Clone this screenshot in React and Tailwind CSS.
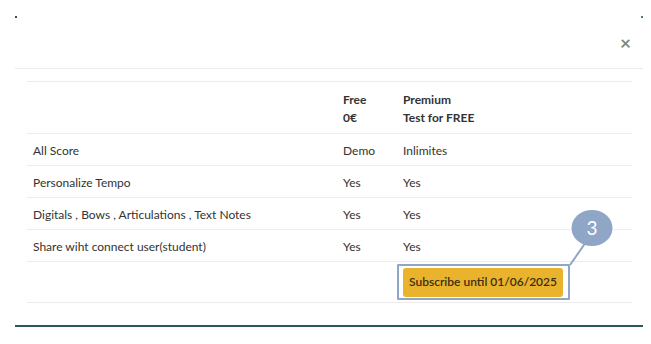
import React from "react";

const rows = [
  { label: "All Score", free: "Demo", premium: "Inlimites" },
  { label: "Personalize Tempo", free: "Yes", premium: "Yes" },
  { label: "Digitals , Bows , Articulations , Text Notes", free: "Yes", premium: "Yes" },
  { label: "Share wiht connect user(student)", free: "Yes", premium: "Yes" },
];

const App = () => {
  return (
    <div
      className="w-[651px] h-[344px] bg-white pt-[16px] pl-[15px] text-[#333] text-[12px]"
      style={{ fontFamily: "Lato, 'Noto Sans', sans-serif" }}
    >
      <div className="relative w-[628px] h-[311px] border-b-2 border-[#2f5660]">
        <span className="absolute left-0 top-0 w-[2px] h-[2px] bg-[#2f5660]" />
        <span className="absolute right-0 top-0 w-[2px] h-[2px] bg-[#4a7a86]" />

        <div className="h-[53px] border-b border-[#ececec] flex items-center justify-end pr-[12px]">
          <span className="text-[#858585] text-[19px] font-bold leading-none">×</span>
        </div>

        <div className="px-[12px] pt-[12px]">
          <table className="w-[605px] border-collapse">
            <thead>
              <tr className="border-t border-b border-[#ececec] h-[52px]">
                <th className="w-[310px]" />
                <th className="w-[60px] text-left font-bold pl-[6px] leading-[18px] align-middle pt-[2px]">
                  <div>Free</div>
                  <div>0€</div>
                </th>
                <th className="text-left font-bold pl-[6px] leading-[18px] align-middle pt-[2px]">
                  <div>Premium</div>
                  <div>Test for FREE</div>
                </th>
              </tr>
            </thead>
            <tbody>
              {rows.map((r) => (
                <tr key={r.label} className="h-[32px] border-b border-[#ececec]">
                  <td className="pl-[6px] pt-[2px]">{r.label}</td>
                  <td className="pl-[6px] pt-[2px]">{r.free}</td>
                  <td className="pl-[6px] pt-[2px]">{r.premium}</td>
                </tr>
              ))}
              <tr className="h-[41px] border-b border-[#ececec]">
                <td />
                <td />
                <td className="pl-[6px]">
                  <div className="relative w-[160px] h-[29px]">
                    <button className="w-[160px] h-[29px] rounded-[3px] bg-[#e9b32e] text-[#3b2f12] font-semibold text-[12px] whitespace-nowrap">
                      Subscribe until 01/06/2025
                    </button>
                    <span className="absolute -left-[6px] -top-[4px] w-[173px] h-[36px] border-2 border-[#8fa6c6] rounded-[1px] pointer-events-none" />
                    <svg className="absolute left-[165px] -top-[48px] overflow-visible" width="50" height="50">
                      <line x1="2" y1="45" x2="18" y2="22" stroke="#8fa6c6" strokeWidth="2" />
                      <ellipse cx="24" cy="8" rx="20.5" ry="18" fill="#8fa6c6" />
                      <text x="24" y="15" textAnchor="middle" fill="#fff" fontSize="19" fontFamily="Lato, sans-serif">3</text>
                    </svg>
                  </div>
                </td>
              </tr>
            </tbody>
          </table>
        </div>
      </div>
    </div>
  );
};

export default App;
